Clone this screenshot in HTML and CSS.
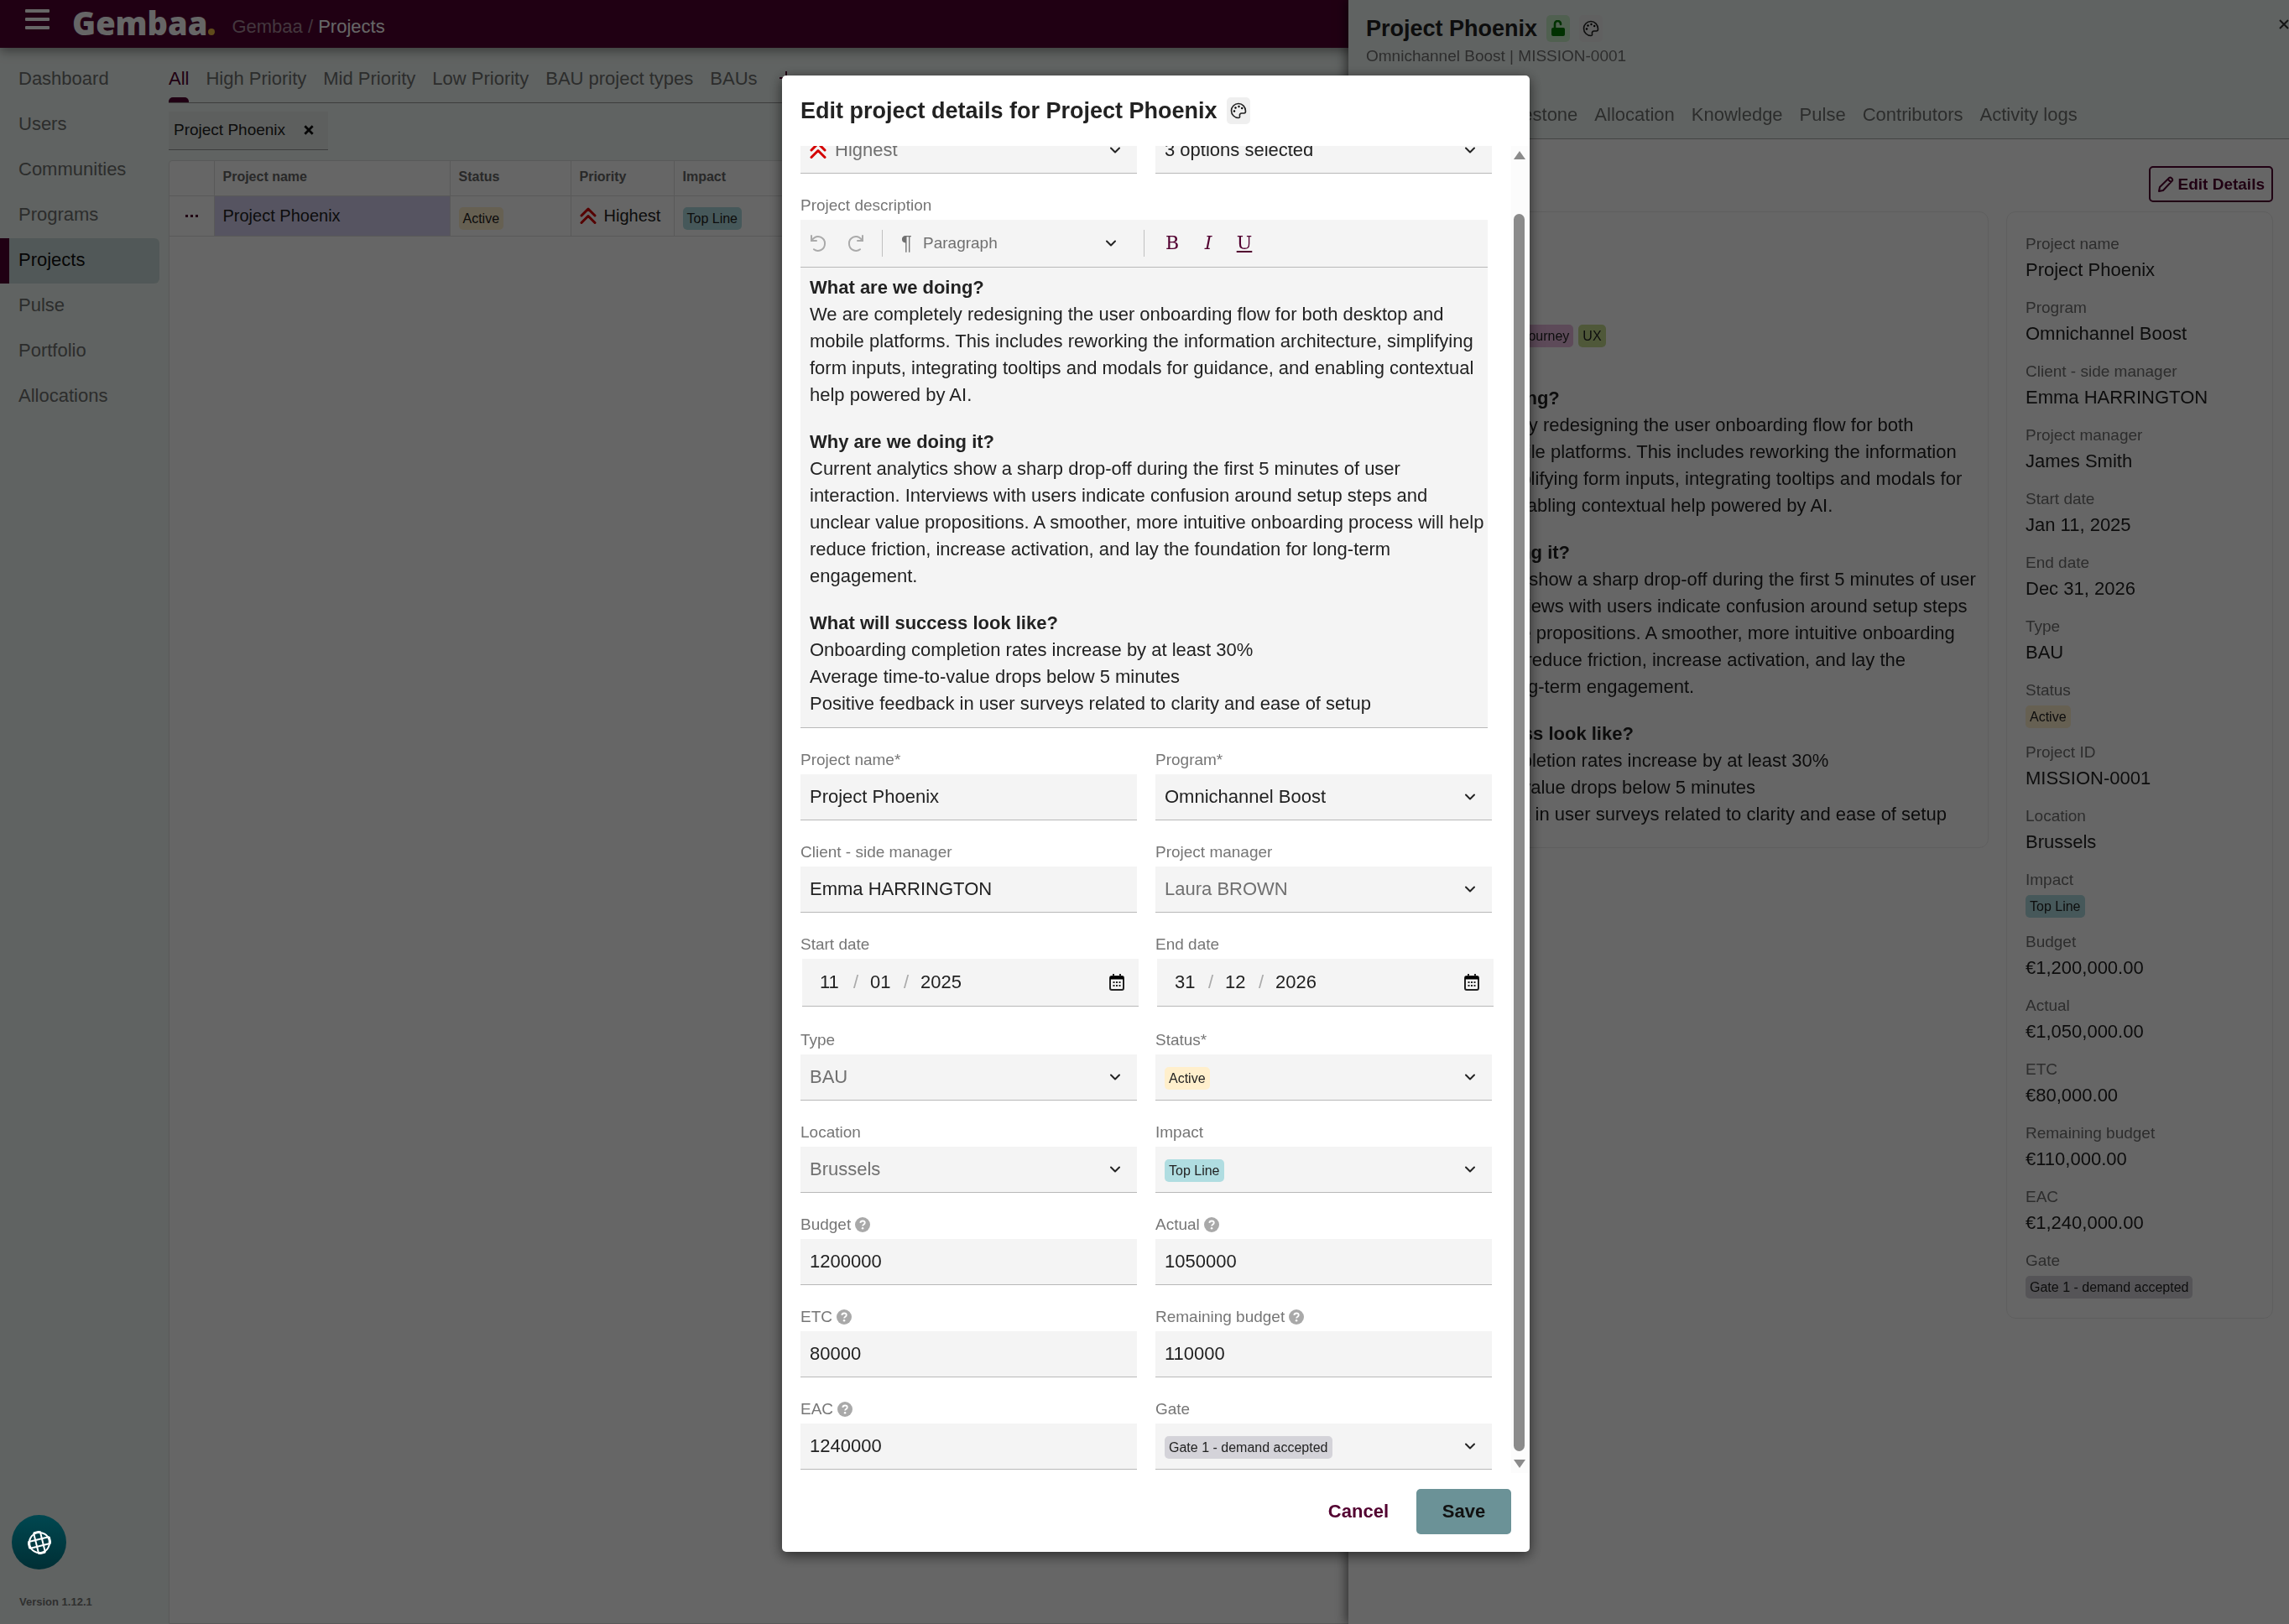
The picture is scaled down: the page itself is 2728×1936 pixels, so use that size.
FILE: index.html
```html
<!DOCTYPE html>
<html lang="en">
<head>
    <meta charset="UTF-8">
    <meta name="viewport" content="width=device-width, initial-scale=1.0">
    <title>Gembaa - Projects</title>
    <link rel="stylesheet" href="styles.css">
</head>
<body>
    <svg class="sprite" aria-hidden="true">
        <symbol id="i-chevron" viewBox="0 0 14 14"><path d="M2 4.500l5 5 5-5" fill="none" stroke="currentColor" stroke-width="2" stroke-linecap="round" stroke-linejoin="round"/></symbol>
        <symbol id="i-highest" viewBox="0 0 20 20"><path d="M2 10l8-8 8 8M2 18.500l8-8 8 8" fill="none" stroke="#d40000" stroke-width="3" stroke-linecap="round" stroke-linejoin="round"/></symbol>
        <symbol id="i-palette" viewBox="0 0 20 20"><path d="M10 1.500a8.500 8.500 0 1 0 0 17c1.300 0 1.800-1 1.500-2.100-.4-2 .4-3.400 2.400-3.400h2.600c1.300 0 2-.8 2-2.400 0-5.200-3.800-9.100-8.500-9.100z" fill="none" stroke="currentColor" stroke-width="1.600"/><circle cx="5" cy="10.500" r="1.200"/><circle cx="6.500" cy="6.500" r="1.200"/><circle cx="10.500" cy="5" r="1.200"/><circle cx="14.200" cy="7" r="1.200"/></symbol>
        <symbol id="i-help" viewBox="0 0 20 20"><circle cx="10" cy="10" r="10" fill="#a9a9a9"/><path d="M7 7.600c.2-1.700 1.400-2.600 3.100-2.600 1.800 0 3 1 3 2.600 0 2.200-3 2.200-3 4.200" fill="none" stroke="#fff" stroke-width="2"/><circle cx="10.100" cy="14.800" r="1.400" fill="#fff"/></symbol>
        <symbol id="i-calendar" viewBox="0 0 18 20"><path d="M5 0v4M13 0v4" stroke="currentColor" stroke-width="2"/><rect x="1" y="3" width="16" height="16" rx="2" fill="none" stroke="currentColor" stroke-width="2"/><path d="M1 3h16v3.500H1z"/><path d="M4.500 10h2M8 10h2M11.500 10h2M4.500 14h2M8 14h2M11.500 14h2" stroke="currentColor" stroke-width="2"/></symbol>
        <symbol id="i-undo" viewBox="0 0 20 20"><path d="M2 1v6h6M2.500 6.500C5 3 9 1 13 2.600c7 3 6.500 13 0 15.600-3 1.200-6 .6-8-1" fill="none" stroke="currentColor" stroke-width="2" stroke-linecap="round"/></symbol>
    </svg>

    <div class="app">
        <header class="topbar">
            <button class="menu-btn" aria-label="Menu"><span></span><span></span><span></span></button>
            <a class="logo" href="#">Gembaa<i></i></a>
            <nav class="breadcrumb" aria-label="Breadcrumb"><a href="#">Gembaa</a> / <b>Projects</b></nav>
        </header>

        <div class="layout">
            <aside class="sidebar">
                <nav>
                    <a href="#">Dashboard</a>
                    <a href="#">Users</a>
                    <a href="#">Communities</a>
                    <a href="#">Programs</a>
                    <a href="#" class="active">Projects</a>
                    <a href="#">Pulse</a>
                    <a href="#">Portfolio</a>
                    <a href="#">Allocations</a>
                </nav>
                <small class="version">Version 1.12.1</small>
            </aside>

            <main class="content">
                <nav class="tabs">
                    <a href="#" class="active">All</a>
                    <a href="#">High Priority</a>
                    <a href="#">Mid Priority</a>
                    <a href="#">Low Priority</a>
                    <a href="#">BAU project types</a>
                    <a href="#">BAUs</a>
                    <button class="add-tab" aria-label="Add view"><svg viewBox="0 0 20 20"><path d="M10 2v16M2 10h16" stroke="currentColor" stroke-width="2"/></svg></button>
                </nav>
                <div class="filter">
                    <input type="text" value="Project Phoenix" aria-label="Filter projects">
                    <button aria-label="Clear filter"><svg viewBox="0 0 12 12"><path d="M2 2l8 8M10 2l-8 8" stroke="#111" stroke-width="2.400"/></svg></button>
                </div>
                <div class="grid-panel">
                    <table class="grid">
                        <thead>
                            <tr>
                                <th class="col-menu"></th>
                                <th class="col-name">Project name</th>
                                <th class="col-status">Status</th>
                                <th class="col-priority">Priority</th>
                                <th>Impact</th>
                            </tr>
                        </thead>
                        <tbody>
                            <tr>
                                <td class="row-menu"><button aria-label="Row menu"><i></i><i></i><i></i></button></td>
                                <td class="selected">Project Phoenix</td>
                                <td class="tag-cell"><span class="tag yellow">Active</span></td>
                                <td><span class="priority"><svg><use href="#i-highest"/></svg>Highest</span></td>
                                <td class="tag-cell"><span class="tag teal">Top Line</span></td>
                            </tr>
                        </tbody>
                    </table>
                </div>
            </main>
        </div>
    </div>

    <section class="drawer">
        <header class="drawer-head">
            <div class="drawer-title">
                <h2>Project Phoenix</h2>
                <button class="icon-btn lock" aria-label="Unlocked"><svg viewBox="0 0 18 20"><path d="M5 9V4.500a3.500 3.500 0 0 1 7 0V5" fill="none" stroke="#007a00" stroke-width="2.600" stroke-linecap="round"/><rect x="1" y="9" width="16" height="10" rx="2" fill="#007a00"/></svg></button>
                <button class="icon-btn" aria-label="Colour"><svg><use href="#i-palette"/></svg></button>
                <button class="close" aria-label="Close"><svg viewBox="0 0 12 12"><path d="M1 1l10 10M11 1l-10 10" stroke="#333" stroke-width="2"/></svg></button>
            </div>
            <p>Omnichannel Boost | MISSION-0001</p>
            <nav class="drawer-tabs">
                <a href="#">Project details</a>
                <a href="#">Milestone</a>
                <a href="#">Allocation</a>
                <a href="#">Knowledge</a>
                <a href="#">Pulse</a>
                <a href="#">Contributors</a>
                <a href="#">Activity logs</a>
            </nav>
        </header>
        <div class="drawer-body">
            <div class="drawer-actions">
                <button class="edit-btn"><svg viewBox="0 0 20 20"><path d="M2 18l1-5L14.500 1.800c1.500-1 4.500 1.700 3.500 3.500L7 17z M13 4l3.500 3.500" fill="none" stroke="currentColor" stroke-width="2" stroke-linejoin="round"/></svg>Edit Details</button>
            </div>
            <div class="drawer-cols">
                <div class="card about">
                    <div class="tags">
                        <span class="tag yellow">Redesign</span>
                        <span class="tag pink">Customer Journey</span>
                        <span class="tag green">UX</span>
                    </div>
                    <div class="rich-text">
                        <p><b>What are we doing?</b><br>We are completely redesigning the user onboarding flow for both desktop and mobile platforms. This includes reworking the information architecture, simplifying form inputs, integrating tooltips and modals for guidance, and enabling contextual help powered by AI.</p>
                        <p><b>Why are we doing it?</b><br>Current analytics show a sharp drop-off during the first 5 minutes of user interaction. Interviews with users indicate confusion around setup steps and unclear value propositions. A smoother, more intuitive onboarding process will help reduce friction, increase activation, and lay the foundation for long-term engagement.</p>
                        <p><b>What will success look like?</b><br>Onboarding completion rates increase by at least 30%<br>Average time-to-value drops below 5 minutes<br>Positive feedback in user surveys related to clarity and ease of setup</p>
                    </div>
                </div>
                <dl class="card facts">
                    <div><dt>Project name</dt><dd>Project Phoenix</dd></div>
                    <div><dt>Program</dt><dd>Omnichannel Boost</dd></div>
                    <div><dt>Client - side manager</dt><dd>Emma HARRINGTON</dd></div>
                    <div><dt>Project manager</dt><dd>James Smith</dd></div>
                    <div><dt>Start date</dt><dd>Jan 11, 2025</dd></div>
                    <div><dt>End date</dt><dd>Dec 31, 2026</dd></div>
                    <div><dt>Type</dt><dd>BAU</dd></div>
                    <div><dt>Status</dt><dd class="has-tag"><span class="tag yellow">Active</span></dd></div>
                    <div><dt>Project ID</dt><dd>MISSION-0001</dd></div>
                    <div><dt>Location</dt><dd>Brussels</dd></div>
                    <div><dt>Impact</dt><dd class="has-tag"><span class="tag teal">Top Line</span></dd></div>
                    <div><dt>Budget</dt><dd>€1,200,000.00</dd></div>
                    <div><dt>Actual</dt><dd>€1,050,000.00</dd></div>
                    <div><dt>ETC</dt><dd>€80,000.00</dd></div>
                    <div><dt>Remaining budget</dt><dd>€110,000.00</dd></div>
                    <div><dt>EAC</dt><dd>€1,240,000.00</dd></div>
                    <div><dt>Gate</dt><dd class="has-tag"><span class="tag grey">Gate 1 - demand accepted</span></dd></div>
                </dl>
            </div>
        </div>
    </section>

    <div class="overlay">
        <form class="modal" role="dialog" aria-labelledby="modalTitle">
            <div class="modal-head">
                <h1 id="modalTitle">Edit project details for Project Phoenix</h1>
                <button type="button" class="icon-btn" aria-label="Colour"><svg><use href="#i-palette"/></svg></button>
            </div>

            <div class="modal-scroll">
                <div class="modal-body">
                    <div class="row">
                        <div class="field">
                            <label for="priority">Priority</label>
                            <div class="box select"><svg class="lead"><use href="#i-highest"/></svg><select id="priority" class="muted"><option>Highest</option></select><svg class="chevron"><use href="#i-chevron"/></svg></div>
                        </div>
                        <div class="field">
                            <label for="tags">Tags</label>
                            <div class="box select"><select id="tags"><option>3 options selected</option></select><svg class="chevron"><use href="#i-chevron"/></svg></div>
                        </div>
                    </div>

                    <div class="field editor">
                        <label id="descLabel">Project description</label>
                        <div class="toolbar">
                            <button type="button" class="tool dim" aria-label="Undo"><svg><use href="#i-undo"/></svg></button>
                            <button type="button" class="tool dim redo" aria-label="Redo"><svg><use href="#i-undo"/></svg></button>
                            <div class="block-type"><span>¶</span><select aria-label="Block type"><option>Paragraph</option></select><svg class="chevron"><use href="#i-chevron"/></svg></div>
                            <button type="button" class="tool letter" aria-label="Bold">B</button>
                            <button type="button" class="tool letter italic" aria-label="Italic">I</button>
                            <button type="button" class="tool letter underline" aria-label="Underline">U</button>
                        </div>
                        <div class="rich-text editable" contenteditable="true" role="textbox" aria-labelledby="descLabel" spellcheck="false">
                            <p><b>What are we doing?</b><br>We are completely redesigning the user onboarding flow for both desktop and mobile platforms. This includes reworking the information architecture, simplifying form inputs, integrating tooltips and modals for guidance, and enabling contextual help powered by AI.</p>
                            <p><b>Why are we doing it?</b><br>Current analytics show a sharp drop-off during the first 5 minutes of user interaction. Interviews with users indicate confusion around setup steps and unclear value propositions. A smoother, more intuitive onboarding process will help reduce friction, increase activation, and lay the foundation for long-term engagement.</p>
                            <p><b>What will success look like?</b><br>Onboarding completion rates increase by at least 30%<br>Average time-to-value drops below 5 minutes<br>Positive feedback in user surveys related to clarity and ease of setup</p>
                        </div>
                    </div>

                    <div class="row">
                        <div class="field">
                            <label for="name">Project name*</label>
                            <input class="box" type="text" id="name" value="Project Phoenix">
                        </div>
                        <div class="field">
                            <label for="program">Program*</label>
                            <div class="box select"><select id="program"><option>Omnichannel Boost</option></select><svg class="chevron"><use href="#i-chevron"/></svg></div>
                        </div>
                    </div>

                    <div class="row">
                        <div class="field">
                            <label for="client">Client - side manager</label>
                            <input class="box" type="text" id="client" value="Emma HARRINGTON">
                        </div>
                        <div class="field">
                            <label for="manager">Project manager</label>
                            <div class="box select"><select id="manager" class="muted"><option>Laura BROWN</option></select><svg class="chevron"><use href="#i-chevron"/></svg></div>
                        </div>
                    </div>

                    <div class="row dates">
                        <div class="field">
                            <label for="startDay">Start date</label>
                            <div class="box date">
                                <input id="startDay" type="text" value="11"><span>/</span><input type="text" value="01" aria-label="Start month"><span>/</span><input class="year" type="text" value="2025" aria-label="Start year">
                                <button type="button" aria-label="Pick start date"><svg><use href="#i-calendar"/></svg></button>
                            </div>
                        </div>
                        <div class="field">
                            <label for="endDay">End date</label>
                            <div class="box date">
                                <input id="endDay" type="text" value="31"><span>/</span><input type="text" value="12" aria-label="End month"><span>/</span><input class="year" type="text" value="2026" aria-label="End year">
                                <button type="button" aria-label="Pick end date"><svg><use href="#i-calendar"/></svg></button>
                            </div>
                        </div>
                    </div>

                    <div class="row">
                        <div class="field">
                            <label for="type">Type</label>
                            <div class="box select"><select id="type" class="muted"><option>BAU</option></select><svg class="chevron"><use href="#i-chevron"/></svg></div>
                        </div>
                        <div class="field">
                            <label for="status">Status*</label>
                            <div class="box select"><select id="status" class="tag yellow"><option>Active</option></select><svg class="chevron"><use href="#i-chevron"/></svg></div>
                        </div>
                    </div>

                    <div class="row">
                        <div class="field">
                            <label for="location">Location</label>
                            <div class="box select"><select id="location" class="muted"><option>Brussels</option></select><svg class="chevron"><use href="#i-chevron"/></svg></div>
                        </div>
                        <div class="field">
                            <label for="impact">Impact</label>
                            <div class="box select"><select id="impact" class="tag teal"><option>Top Line</option></select><svg class="chevron"><use href="#i-chevron"/></svg></div>
                        </div>
                    </div>

                    <div class="row">
                        <div class="field">
                            <label for="budget">Budget <svg><use href="#i-help"/></svg></label>
                            <input class="box" type="text" id="budget" value="1200000">
                        </div>
                        <div class="field">
                            <label for="actual">Actual <svg><use href="#i-help"/></svg></label>
                            <input class="box" type="text" id="actual" value="1050000">
                        </div>
                    </div>

                    <div class="row">
                        <div class="field">
                            <label for="etc">ETC <svg><use href="#i-help"/></svg></label>
                            <input class="box" type="text" id="etc" value="80000">
                        </div>
                        <div class="field">
                            <label for="remaining">Remaining budget <svg><use href="#i-help"/></svg></label>
                            <input class="box" type="text" id="remaining" value="110000">
                        </div>
                    </div>

                    <div class="row">
                        <div class="field">
                            <label for="eac">EAC <svg><use href="#i-help"/></svg></label>
                            <input class="box" type="text" id="eac" value="1240000">
                        </div>
                        <div class="field">
                            <label for="gate">Gate</label>
                            <div class="box select"><select id="gate" class="tag grey"><option>Gate 1 - demand accepted</option></select><svg class="chevron"><use href="#i-chevron"/></svg></div>
                        </div>
                    </div>
                </div>
                <div class="scrollbar" aria-hidden="true">
                    <svg viewBox="0 0 14 10"><path d="M7 0l7 10H0z"/></svg>
                    <div class="thumb"></div>
                    <svg viewBox="0 0 14 10"><path d="M7 10L0 0h14z"/></svg>
                </div>
            </div>

            <div class="modal-foot">
                <button type="button" class="cancel">Cancel</button>
                <button type="submit" class="save">Save</button>
            </div>
        </form>
    </div>

    <button class="chat" aria-label="Help">
        <svg viewBox="0 0 28 28" fill="none" stroke="#fff" stroke-width="2">
            <g transform="rotate(-14 14 14)">
                <circle cx="14" cy="14" r="12"/>
                <path d="M10 1v26M18 1v26M1 10h26M1 18h26M10 1h8M10 27h8M1 10v8M27 10v8"/>
            </g>
        </svg>
    </button>
</body>
</html>
```
FILE: styles.css
```css
* {
    box-sizing: border-box;
}
body {
    margin: 0;
    font-family: "Liberation Sans", Arial, sans-serif;
    font-size: 22px;
    line-height: 32px;
    color: #222;
    background-color: #f0f7f4;
    overflow: hidden;
}
button, input, select {
    font: inherit;
    color: inherit;
    border: none;
    background: none;
    padding: 0;
    margin: 0;
}
select {
    appearance: none;
}
a {
    color: inherit;
    text-decoration: none;
}
h1, h2, p, dl, dd {
    margin: 0;
}
svg {
    display: block;
    flex: none;
    width: 20px;
    height: 20px;
}
.sprite {
    position: absolute;
    width: 0;
    height: 0;
}

/* page behind the dialog */
.app {
    display: flex;
    flex-direction: column;
    height: 100vh;
}
.topbar {
    display: flex;
    align-items: center;
    height: 57px;
    padding: 0 30px;
    background-color: #520030;
    color: #fff;
    box-shadow: 0 4px 12px rgba(0, 0, 0, 0.4);
    z-index: 1;
}
.menu-btn {
    display: flex;
    flex-direction: column;
    gap: 6px;
    width: 29px;
    margin: 0 27px 11px 0;
}
.menu-btn span {
    height: 4px;
    border-radius: 1px;
    background-color: #fff;
}
.logo {
    display: flex;
    align-items: baseline;
    gap: 1px;
    margin-bottom: 4px;
    font-family: "Open Sans", sans-serif;
    font-size: 38px;
    font-weight: 800;
}
.logo i {
    width: 8px;
    height: 8px;
    border-radius: 4px;
    background-color: #eebb44;
}
.breadcrumb {
    margin: 6px 0 0 20px;
    color: #a88a9b;
}
.breadcrumb b {
    font-weight: normal;
    color: #fff;
}
.layout {
    flex: 1;
    display: flex;
}
.sidebar {
    display: flex;
    flex-direction: column;
    justify-content: space-between;
    width: 201px;
    padding: 11px 11px 10px 0;
    color: #6e706f;
}
.sidebar nav a {
    display: flex;
    align-items: center;
    height: 54px;
    padding: 0 0 2px 11px;
    border-left: 11px solid transparent;
    border-radius: 0 6px 6px 0;
}
.sidebar nav .active {
    border-left-color: #520030;
    background-color: #cbdcdb;
    color: #111;
}
.version {
    padding-left: 23px;
    font-size: 13px;
    font-weight: bold;
    color: #777;
}
.content {
    flex: 1;
    display: flex;
    flex-direction: column;
}
.tabs {
    display: flex;
    gap: 20px;
    height: 66px;
    border-bottom: 1px solid #999;
    color: #6e706f;
}
.tabs a {
    display: flex;
    flex-direction: column;
    justify-content: space-between;
    padding-top: 21px;
}
.tabs .active {
    color: #520030;
}
.tabs .active::after {
    content: "";
    height: 6px;
    border-radius: 5px 5px 0 0;
    background-color: #520030;
}
.add-tab {
    color: #520030;
    margin: 6px 0 0 4px;
}
.filter {
    display: flex;
    align-items: center;
    width: 190px;
    height: 46px;
    margin-top: 10px;
    padding: 0 16px 2px 6px;
    background-color: #e8eeec;
    border-bottom: 1px solid #999;
    font-size: 19px;
}
.filter input {
    flex: 1;
    min-width: 0;
}
.filter svg {
    width: 14px;
    height: 14px;
}
.grid-panel {
    flex: 1;
    margin-top: 12px;
    background-color: #fff;
    border: 1px solid #dfdfdf;
    border-radius: 4px 0 0 0;
}
.grid {
    width: 100%;
    border-collapse: collapse;
    table-layout: fixed;
    font-size: 20px;
}
.grid th, .grid td {
    border-right: 1px solid #dfdfdf;
    border-bottom: 1px solid #dfdfdf;
    padding: 0 10px;
    text-align: left;
}
.grid th {
    height: 41px;
    padding-bottom: 2px;
    font-size: 16px;
    color: #666;
}
.grid td {
    height: 48px;
}
.grid .tag-cell {
    padding-top: 3px;
}
.col-menu {
    width: 53px;
}
.col-name {
    width: 281px;
}
.col-status {
    width: 144px;
}
.col-priority {
    width: 123px;
}
.grid .selected {
    background-color: #d6d2f2;
}
.row-menu button {
    display: flex;
    gap: 3px;
    margin: 0 auto;
}
.row-menu i {
    width: 3px;
    height: 3px;
    background-color: #520030;
}
.priority {
    display: flex;
    align-items: center;
    gap: 9px;
}

.tag {
    display: inline-block;
    flex: none;
    height: 27px;
    padding: 0 5px;
    border-radius: 5px;
    font-size: 16px;
    line-height: 27px;
    white-space: nowrap;
    vertical-align: middle;
}
.yellow {
    background-color: #ffefcc;
}
.teal {
    background-color: #b0dde1;
}
.grey {
    background-color: #d4d3d9;
}
.pink {
    background-color: #e9bade;
}
.green {
    background-color: #c5dd8f;
}

/* project drawer */
.drawer {
    position: fixed;
    top: 0;
    right: 0;
    bottom: 0;
    z-index: 2;
    width: 1121px;
    background-color: #fff;
    box-shadow: -3px 0 12px rgba(0, 0, 0, 0.5);
}
.drawer-head {
    height: 166px;
    padding: 18px 0 0 21px;
    background-color: #f0f7f4;
    border-bottom: 1px solid #aaa;
}
.drawer-title {
    display: flex;
    align-items: center;
    gap: 11px;
}
.drawer-title h2, .modal-head h1 {
    font-size: 27px;
    line-height: 32px;
}
.drawer-head p {
    margin-top: 1px;
    font-size: 19px;
    color: #707070;
}
.icon-btn {
    display: flex;
    align-items: center;
    justify-content: center;
    width: 28px;
    height: 32px;
    border-radius: 5px;
    background-color: #efefef;
}
.icon-btn.lock {
    background-color: #c9efc9;
}
.close {
    margin: -10px 0 0 auto;
}
.close svg {
    width: 12px;
    height: 12px;
}
.drawer-tabs {
    display: flex;
    gap: 20px;
    margin-top: 38px;
    color: #6e706f;
}
.drawer-body {
    padding: 32px 19px 0 21px;
}
.drawer-actions {
    display: flex;
    justify-content: flex-end;
}
.edit-btn {
    display: flex;
    align-items: center;
    gap: 5px;
    height: 43px;
    padding: 0 8px;
    border: 2px solid #520030;
    border-radius: 5px;
    color: #520030;
    font-size: 19px;
    font-weight: bold;
}
.drawer-cols {
    display: flex;
    align-items: flex-start;
    gap: 21px;
    margin-top: 11px;
}
.card {
    border: 1px solid #ebebeb;
    border-radius: 11px;
}
.about {
    flex: 1;
    padding: 134px 10px 23px 22px;
}
.tags {
    display: flex;
    gap: 6px;
    margin-bottom: 45px;
}
.facts {
    display: flex;
    flex-direction: column;
    gap: 15px;
    width: 318px;
    padding: 24px 22px 23px;
}
.facts dt {
    margin-bottom: 1px;
    font-size: 19px;
    line-height: 28px;
    color: #707070;
}
.facts .has-tag {
    display: flex;
    height: 30px;
    padding-top: 3px;
    line-height: 0;
}
.rich-text p + p {
    margin-top: 24px;
}

/* dialog */
.overlay {
    position: fixed;
    inset: 0;
    z-index: 3;
    display: flex;
    justify-content: center;
    padding: 90px 0 86px 27px;
    background-color: rgba(0, 0, 0, 0.6);
}
.modal {
    display: flex;
    flex-direction: column;
    width: 891px;
    background-color: #fff;
    border-radius: 5px;
    box-shadow: 0 4px 16px rgba(0, 0, 0, 0.6);
}
.modal-head {
    display: flex;
    align-items: center;
    gap: 11px;
    height: 84px;
    padding-left: 22px;
}
.modal-scroll {
    flex: 1;
    display: flex;
    min-height: 0;
}
.modal-body {
    flex: 1;
    display: flex;
    flex-direction: column;
    justify-content: flex-end;
    gap: 24px;
    padding: 0 23px 4px 22px;
    overflow: hidden;
}
.row {
    display: grid;
    grid-template-columns: 1fr 1fr;
    gap: 22px;
}
.dates {
    margin-bottom: 2px;
}
.field {
    display: flex;
    flex-direction: column;
}
.field label {
    display: flex;
    align-items: center;
    gap: 5px;
    margin-bottom: 3px;
    font-size: 19px;
    line-height: 28px;
    color: #767676;
}
.field label svg {
    width: 18px;
    height: 18px;
}
.box {
    width: 100%;
    height: 55px;
    padding: 0 11px;
    background-color: #f4f4f4;
    border-bottom: 1px solid #b8b8b8;
}
.select {
    display: flex;
    align-items: center;
    padding-right: 19px;
}
.select select:not(.tag) {
    flex: 1;
}
.select .tag {
    margin-top: 3px;
}
.muted {
    color: #707070;
}
.lead {
    margin-right: 10px;
}
.chevron {
    width: 14px;
    height: 14px;
    margin-left: auto;
}
.date {
    display: flex;
    align-items: center;
    height: 57px;
    margin-left: 2px;
    padding: 0 16px 0 21px;
}
.date input {
    width: 26px;
}
.date .year {
    width: 60px;
}
.date span {
    width: 34px;
    text-align: center;
    color: #aaa;
}
.date button {
    margin-left: auto;
}
.editor {
    margin-right: 5px;
}
.toolbar {
    display: flex;
    align-items: center;
    height: 57px;
    padding: 0 11px;
    background-color: #f4f4f4;
    border-bottom: 1px solid #b8b8b8;
}
.tool {
    width: 22px;
    margin-right: 21px;
    color: #520030;
}
.tool.dim {
    color: #aaa;
}
.redo {
    transform: scaleX(-1);
}
.letter {
    font-family: "DejaVu Serif", serif;
    font-size: 22px;
}
.italic {
    font-style: italic;
}
.underline {
    text-decoration: underline;
}
.block-type {
    display: flex;
    align-items: center;
    width: 313px;
    height: 32px;
    margin-right: 22px;
    padding: 0 32px 0 22px;
    border: solid #c1c1c1;
    border-width: 0 1px;
    font-size: 19px;
    color: #707070;
}
.block-type span {
    width: 26px;
    font-size: 24px;
}
.block-type .chevron {
    color: #222;
}
.editable {
    height: 549px;
    padding: 8px 2px 0 11px;
    background-color: #f4f4f4;
    border-bottom: 1px solid #b8b8b8;
    outline: none;
}
.scrollbar {
    display: flex;
    flex-direction: column;
    align-items: center;
    justify-content: space-between;
    width: 22px;
    padding: 6px 3px 6px 0;
    background-color: #fcfcfc;
}
.scrollbar svg {
    width: 14px;
    height: 10px;
    fill: #8b8b8b;
}
.thumb {
    flex: 1;
    width: 13px;
    margin: 65px 0 10px;
    border-radius: 7px;
    background-color: #8b8b8b;
}
.modal-foot {
    display: flex;
    align-items: center;
    justify-content: flex-end;
    gap: 33px;
    height: 94px;
    padding: 0 22px 3px 0;
}
.cancel {
    font-weight: bold;
    color: #520030;
}
.save {
    width: 113px;
    height: 54px;
    border-radius: 5px;
    background-color: #6b9297;
    color: #111;
    font-weight: bold;
}

.chat {
    position: fixed;
    left: 14px;
    bottom: 65px;
    z-index: 4;
    display: flex;
    align-items: center;
    justify-content: center;
    width: 65px;
    height: 65px;
    border-radius: 50%;
    background-image: linear-gradient(to top, #002f35, #004750);
}
.chat svg {
    width: 28px;
    height: 28px;
}
```
